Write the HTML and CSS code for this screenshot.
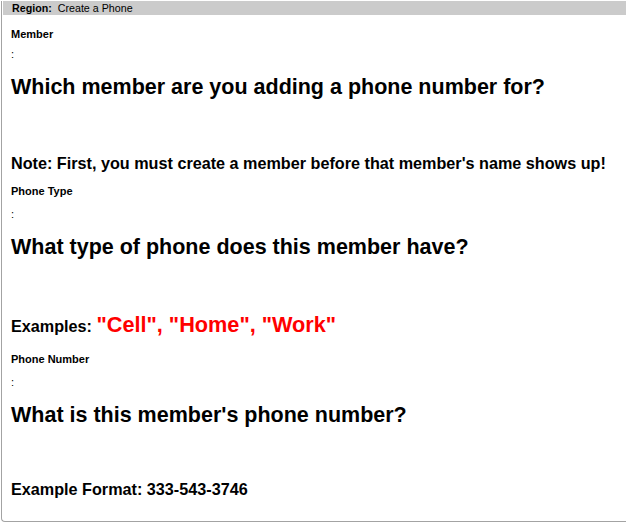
FILE: index.html
```html
<!DOCTYPE html>
<html lang="en">
<head>
<meta charset="utf-8">
<title>Create a Phone</title>
<link rel="stylesheet" href="styles.css">
</head>
<body>
<div class="panel">
  <div class="bar"><b>Region:</b>&nbsp; Create a Phone</div>
  <div class="content">
    <div class="field">
      <div class="field-label">Member</div>
      <div class="colon">:</div>
      <h2 class="question">Which member are you adding a phone number for?</h2>
      <p class="note">Note: First, you must create a member before that member's name shows up!</p>
    </div>
    <div class="field">
      <div class="field-label">Phone Type</div>
      <div class="colon">:</div>
      <h2 class="question">What type of phone does this member have?</h2>
      <p class="note note-examples">Examples: <span class="red">"Cell", "Home", "Work"</span></p>
    </div>
    <div class="field">
      <div class="field-label">Phone Number</div>
      <div class="colon">:</div>
      <h2 class="question">What is this member's phone number?</h2>
      <p class="note">Example Format: 333-543-3746</p>
    </div>
  </div>
</div>
</body>
</html>
```
FILE: styles.css
```css
body {
  margin: 0;
  font-family: "Liberation Sans", Arial, Helvetica, sans-serif;
  color: #000;
  background: #fff;
}
.panel {
  margin-left: 1px;
  border-left: 1px solid #a3a3a3;
  border-bottom: 1px solid #a3a3a3;
  border-bottom-left-radius: 4px;
  padding-bottom: 23px;
}
.bar {
  margin: 1px 0 0 1px;
  height: 14px;
  background: #cbcbcb;
  font-size: 10.7px;
  line-height: 14px;
  padding-left: 9px;
}
.content {
  padding-left: 9px;
  padding-top: 13px;
}
.field + .field {
  margin-top: 13.5px;
}
.field-label {
  font-size: 11px;
  font-weight: bold;
  line-height: 13px;
}
.colon {
  margin-top: 10px;
  font-size: 11px;
  line-height: 13px;
}
.field:first-child .colon {
  margin-top: 7px;
}
.question {
  margin: 14px 0 0;
  font-size: 21.5px;
  line-height: 25px;
  font-weight: bold;
}
.note {
  margin: 53.5px 0 0;
  font-size: 16.2px;
  line-height: 18px;
  font-weight: bold;
}
.field:last-child .note {
  margin-top: 52px;
}
.note-examples {
  margin-top: 52px;
  line-height: 25px;
}
.red {
  color: #ff0000;
  font-size: 21.7px;
}
```
